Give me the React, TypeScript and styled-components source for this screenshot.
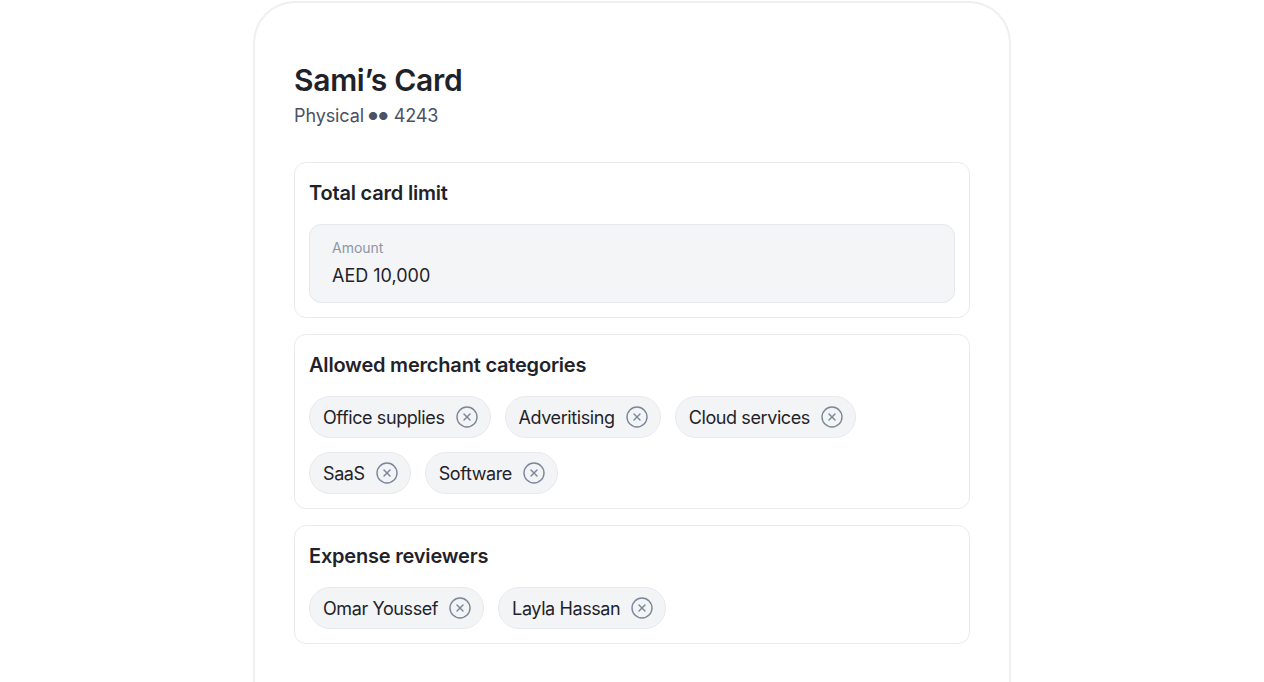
import React from 'react';
import styled, { createGlobalStyle } from 'styled-components';
import { CircleX } from 'lucide-react';

const GlobalStyle = createGlobalStyle`
    html, body {
        margin: 0;
        padding: 0;
        background: #ffffff;
    }
    body {
        font-family: Inter, "Noto Sans", sans-serif;
        color: #1f2329;
        -webkit-font-smoothing: antialiased;
    }
`;

const Page = styled.div`
    display: flex;
    justify-content: center;
    padding-top: 1px;
    height: 682px;
    overflow: hidden;
    box-sizing: border-box;
`;

const Card = styled.div`
    width: 758px;
    min-height: 760px;
    box-sizing: border-box;
    border: 2px solid #efeff3;
    border-bottom: none;
    border-radius: 42px 42px 0 0;
    padding: 59px 39px 0 39px;
    display: flex;
    flex-direction: column;
`;

const Title = styled.h1`
    margin: 0;
    font-size: 30px;
    line-height: 36px;
    font-weight: 600;
    letter-spacing: -0.3px;
    color: #1f2329;
`;

const Subtitle = styled.div`
    margin-top: 5px;
    font-size: 18px;
    line-height: 26px;
    letter-spacing: -0.1px;
    color: #4a5263;
`;

const Dots = styled.span`
    font-size: 11px;
    letter-spacing: 0.3px;
    vertical-align: 2px;
    margin-left: -1px;
`;

const Sections = styled.div`
    margin-top: 33px;
    display: flex;
    flex-direction: column;
    gap: 16px;
`;

const Section = styled.section`
    border: 1px solid #e9ebef;
    border-radius: 12px;
    padding: 15px 14px 14px 14px;
    display: flex;
    flex-direction: column;
    gap: 16px;
`;

const SectionTitle = styled.h2`
    margin: 0;
    font-size: 20px;
    line-height: 30px;
    font-weight: 600;
    letter-spacing: -0.2px;
    color: #1f2329;
`;

const Field = styled.div`
    height: 79px;
    box-sizing: border-box;
    background: #f4f5f7;
    border: 1px solid #e6e8ec;
    border-radius: 12px;
    padding: 14px 22px;
    display: flex;
    flex-direction: column;
    justify-content: center;
`;

const FieldLabel = styled.div`
    font-size: 14px;
    line-height: 20px;
    color: #8c95a6;
`;

const FieldValue = styled.div`
    margin-top: 5px;
    font-size: 18px;
    line-height: 26px;
    color: #1f2329;
`;

const ChipList = styled.div`
    display: flex;
    flex-wrap: wrap;
    gap: 14px;
`;

const Chip = styled.div`
    height: 42px;
    box-sizing: border-box;
    display: inline-flex;
    align-items: center;
    gap: 10px;
    padding: 0 11px 0 13px;
    background: #f3f4f6;
    border: 1px solid #e8eaee;
    border-radius: 21px;
    font-size: 18px;
    letter-spacing: -0.4px;
    color: #1f2329;
`;

const RemoveIcon = styled(CircleX)`
    color: #7a869a;
    flex-shrink: 0;
`;

const categories = ['Office supplies', 'Adveritising', 'Cloud services', 'SaaS', 'Software'];
const reviewers = ['Omar Youssef', 'Layla Hassan'];

const Chips = ({ items }: { items: string[] }) => (
    <ChipList>
        {items.map((item) => (
            <Chip key={item}>
                {item}
                <RemoveIcon size={24} strokeWidth={1.4} />
            </Chip>
        ))}
    </ChipList>
);

export default function App() {
    return (
        <>
            <GlobalStyle />
            <Page>
                <Card>
                    <Title>Sami’s Card</Title>
                    <Subtitle>
                        Physical <Dots>●●</Dots> 4243
                    </Subtitle>
                    <Sections>
                        <Section>
                            <SectionTitle>Total card limit</SectionTitle>
                            <Field>
                                <FieldLabel>Amount</FieldLabel>
                                <FieldValue>AED 10,000</FieldValue>
                            </Field>
                        </Section>
                        <Section>
                            <SectionTitle>Allowed merchant categories</SectionTitle>
                            <Chips items={categories} />
                        </Section>
                        <Section>
                            <SectionTitle>Expense reviewers</SectionTitle>
                            <Chips items={reviewers} />
                        </Section>
                    </Sections>
                </Card>
            </Page>
        </>
    );
}
